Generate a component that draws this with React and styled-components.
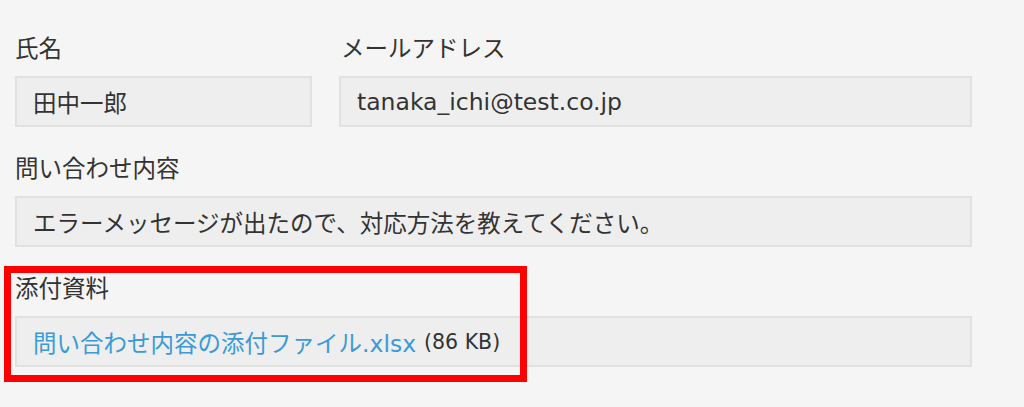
import React from "react"
import styled, { createGlobalStyle } from "styled-components"

const GlobalStyle = createGlobalStyle`
    html, body {
        margin: 0;
        padding: 0;
        background: #f5f5f5;
    }
    body {
        font-family: "DejaVu Sans", "Noto Sans CJK JP", sans-serif;
        color: #333333;
    }
`

const Page = styled.div`
    width: 1024px;
    height: 407px;
    box-sizing: border-box;
    padding: 33px 52px 0 15px;
    overflow: hidden;
`

const Row = styled.div`
    display: grid;
    grid-template-columns: ${(props) => props.columns || "1fr"};
    column-gap: 27px;
    margin-bottom: 26px;
`

const Field = styled.div`
    position: relative;
    min-width: 0;
`

const Label = styled.div`
    font-size: 23.5px;
    line-height: 32px;
    height: 32px;
    margin-bottom: 11px;
    padding-left: ${(props) => props.indent || 0}px;
    color: #333333;
`

const Value = styled.div`
    box-sizing: border-box;
    height: 51px;
    display: flex;
    align-items: center;
    padding: 0 16px;
    background: #eeeeee;
    border: 2px solid #e1e1e1;
    font-size: 23.5px;
    white-space: nowrap;
    color: #333333;
`

const FileLink = styled.a`
    color: #3a9ad9;
    text-decoration: none;
`

const FileSize = styled.span`
    margin-left: 8px;
    font-size: 20.5px;
    color: #333333;
`

const Highlight = styled.div`
    position: absolute;
    left: -11px;
    top: -7px;
    width: 523px;
    height: 116px;
    box-sizing: border-box;
    border: 7px solid #ff0000;
    pointer-events: none;
`

export default function App() {
    return (
        <>
            <GlobalStyle />
            <Page>
                <Row columns="297px 1fr">
                    <Field>
                        <Label>氏名</Label>
                        <Value>田中一郎</Value>
                    </Field>
                    <Field>
                        <Label indent={2}>メールアドレス</Label>
                        <Value>tanaka_ichi@test.co.jp</Value>
                    </Field>
                </Row>
                <Row>
                    <Field>
                        <Label>問い合わせ内容</Label>
                        <Value>エラーメッセージが出たので、対応方法を教えてください。</Value>
                    </Field>
                </Row>
                <Row>
                    <Field>
                        <Label>添付資料</Label>
                        <Value>
                            <FileLink href="#">問い合わせ内容の添付ファイル.xlsx</FileLink>
                            <FileSize>(86 KB)</FileSize>
                        </Value>
                        <Highlight />
                    </Field>
                </Row>
            </Page>
        </>
    )
}
